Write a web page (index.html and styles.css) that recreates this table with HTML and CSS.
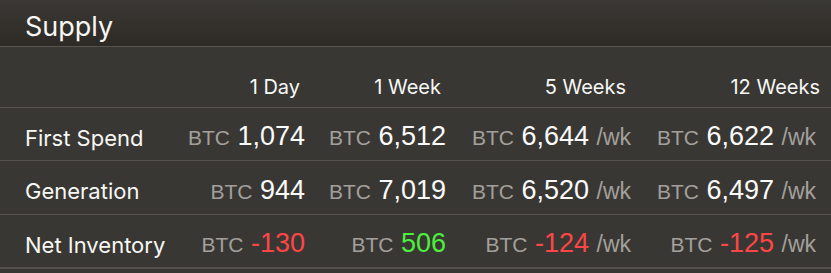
FILE: index.html
```html
<!DOCTYPE html>
<html>
<head>
<meta charset="utf-8">
<link rel="stylesheet" href="styles.css">
</head>
<body>
<div class="panel">
  <div class="title">Supply</div>
  <div class="row head">
    <div></div>
    <div class="h">1 Day</div>
    <div class="h">1 Week</div>
    <div class="h">5 Weeks</div>
    <div class="h last">12 Weeks</div>
  </div>
  <div class="row r1">
    <div class="label">First Spend</div>
    <div class="v"><span class="u">BTC</span> <span class="n">1,074</span></div>
    <div class="v"><span class="u">BTC</span> <span class="n">6,512</span></div>
    <div class="v"><span class="u">BTC</span> <span class="n">6,644</span> <span class="wk">/wk</span></div>
    <div class="v"><span class="u">BTC</span> <span class="n">6,622</span> <span class="wk">/wk</span></div>
  </div>
  <div class="row r2">
    <div class="label">Generation</div>
    <div class="v"><span class="u">BTC</span> <span class="n">944</span></div>
    <div class="v"><span class="u">BTC</span> <span class="n">7,019</span></div>
    <div class="v"><span class="u">BTC</span> <span class="n">6,520</span> <span class="wk">/wk</span></div>
    <div class="v"><span class="u">BTC</span> <span class="n">6,497</span> <span class="wk">/wk</span></div>
  </div>
  <div class="row lastrow">
    <div class="label">Net Inventory</div>
    <div class="v"><span class="u">BTC</span> <span class="n neg">-130</span></div>
    <div class="v"><span class="u">BTC</span> <span class="n pos">506</span></div>
    <div class="v"><span class="u">BTC</span> <span class="n neg">-124</span> <span class="wk">/wk</span></div>
    <div class="v"><span class="u">BTC</span> <span class="n neg">-125</span> <span class="wk">/wk</span></div>
  </div>
</div>
</body>
</html>
```

FILE: styles.css
```css
html, body {
  margin: 0;
  padding: 0;
  background: #393733;
}
.panel {
  width: 831px;
  color: #f7f7f5;
  font-family: Inter, "Liberation Sans", sans-serif;
}
.title {
  height: 47px;
  box-sizing: border-box;
  padding: 11px 0 0 25px;
  font-size: 27px;
  line-height: 32px;
  background: linear-gradient(#3b3935, #2d2a25);
  border-bottom: 1px solid #57544f;
}
.row {
  display: grid;
  grid-template-columns: 180px 125px 141px 185px 185px 15px;
  align-items: center;
  height: 52px;
  border-bottom: 1px solid #55524e;
}
.row.head {
  height: 60px;
  align-items: end;
}
.row.r2 {
  height: 53px;
}
.h {
  text-align: right;
  padding-right: 5px;
  padding-bottom: 8px;
  font-size: 20px;
  line-height: 24px;
}
.h.last {
  padding-right: 0;
  margin-right: -4px;
}
.label {
  padding-left: 25px;
  font-size: 22px;
  padding-top: 7px;
}
.v {
  text-align: right;
  white-space: nowrap;
  font-family: "Liberation Sans", Arial, sans-serif;
  font-size: 27px;
  line-height: 32px;
  padding-top: 6px;
}
.u {
  font-size: 21px;
  color: #a3a09c;
}
.n {
  color: #fbfbfb;
}
.wk {
  font-size: 23px;
  color: #a3a09c;
}
.neg { color: #ff4646; }
.pos { color: #4cf03c; }
.lastrow {
  border-bottom: 2px solid #55524e;
}
```
